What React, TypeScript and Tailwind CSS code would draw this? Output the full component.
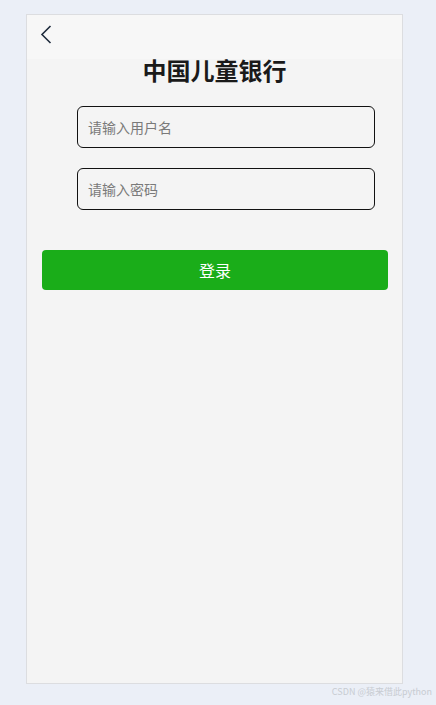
import React from "react";

export default function App() {
  return (
    <div
      className="w-[436px] h-[705px] bg-[#ebeff7] relative overflow-hidden"
      style={{ fontFamily: '"Noto Sans CJK SC", "Noto Sans", sans-serif' }}
    >
      <div className="pt-[14px] pl-[26px]">
        <div className="w-[377px] h-[670px] border border-[#dcdde0] bg-[#f4f4f4] flex flex-col">
          <div className="h-[44px] bg-[#f7f7f7] flex items-start pl-[13px] pt-[10px]">
            <svg width="12" height="19" viewBox="0 0 12 19" fill="none">
              <path d="M10.5 1 L2 9.5 L10.5 18" stroke="#1e2b3c" strokeWidth="1.6" />
            </svg>
          </div>
          <div className="text-center text-[24px] font-bold text-[#1a1a1a] leading-[24px] -mt-[1px]">
            中国儿童银行
          </div>
          <div className="flex flex-col items-start pl-[50px] mt-[24px] gap-[20px]">
            <div className="w-[298px] h-[42px] border border-[#111] rounded-[6px] flex items-center pl-[10px] text-[14px] text-[#7a7a7a]">
              请输入用户名
            </div>
            <div className="w-[298px] h-[42px] border border-[#111] rounded-[6px] flex items-center pl-[10px] text-[14px] text-[#7a7a7a]">
              请输入密码
            </div>
          </div>
          <div className="pl-[15px] pr-[14px] mt-[40px]">
            <div className="h-[40px] bg-[#1aad19] rounded-[4px] flex items-center justify-center text-white text-[16px]">
              登录
            </div>
          </div>
        </div>
      </div>
      <div className="absolute right-[4px] top-[686px] text-[9px] text-[#c8ccd2] leading-[12px]">
        CSDN @猿来借此python
      </div>
    </div>
  );
}
